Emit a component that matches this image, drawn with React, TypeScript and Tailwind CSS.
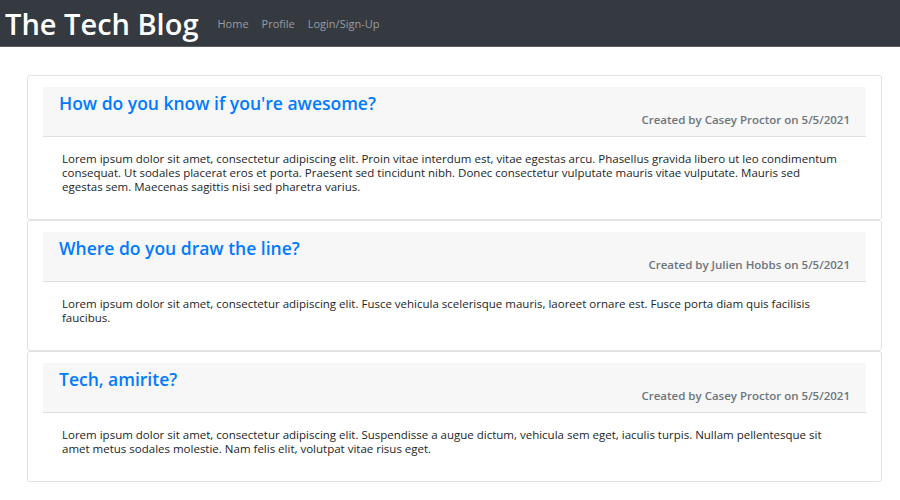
const posts = [
  {
    title: "How do you know if you're awesome?",
    author: 'Casey Proctor',
    date: '5/5/2021',
    body: 'Lorem ipsum dolor sit amet, consectetur adipiscing elit. Proin vitae interdum est, vitae egestas arcu. Phasellus gravida libero ut leo condimentum consequat. Ut sodales placerat eros et porta. Praesent sed tincidunt nibh. Donec consectetur vulputate mauris vitae vulputate. Mauris sed egestas sem. Maecenas sagittis nisi sed pharetra varius.',
  },
  {
    title: 'Where do you draw the line?',
    author: 'Julien Hobbs',
    date: '5/5/2021',
    body: 'Lorem ipsum dolor sit amet, consectetur adipiscing elit. Fusce vehicula scelerisque mauris, laoreet ornare est. Fusce porta diam quis facilisis faucibus.',
  },
  {
    title: 'Tech, amirite?',
    author: 'Casey Proctor',
    date: '5/5/2021',
    body: 'Lorem ipsum dolor sit amet, consectetur adipiscing elit. Suspendisse a augue dictum, vehicula sem eget, iaculis turpis. Nullam pellentesque sit amet metus sodales molestie. Nam felis elit, volutpat vitae risus eget.',
  },
];

const Navbar = () => (
  <nav className="flex h-[47px] items-center border-b border-[#5c5f62] bg-[#343a40] pl-[5px]">
    <h1 className="text-[29px] font-semibold leading-none text-white">The Tech Blog</h1>
    <div className="ml-[19px] mt-[2px] flex gap-[13px] text-[11px] text-[#9a9da0]">
      <a>Home</a>
      <a>Profile</a>
      <a>Login/Sign-Up</a>
    </div>
  </nav>
);

type Post = (typeof posts)[number];

const PostCard = ({ post }: { post: Post }) => (
  <article className="rounded-[3px] border border-[#e2e2e2] px-[15px] pt-[11px]">
    <header className="h-[50px] border-b border-[#dfdfdf] bg-[#f7f7f7] px-[16px] pt-[6px]">
      <h2 className="text-[17.5px] font-semibold leading-[20px] text-[#007bff]">{post.title}</h2>
      <p className="text-right text-[11.5px] font-semibold leading-[14px] text-[#6c757d]">
        Created by {post.author} on {post.date}
      </p>
    </header>
    <p className="pb-[25px] pl-[19px] pr-[25px] pt-[15px] text-[11.5px] leading-[14px] text-[#212529]">{post.body}</p>
  </article>
);

export default function App() {
  return (
    <div className="min-h-[500px] bg-white font-['Open_Sans',sans-serif]">
      <Navbar />
      <main className="mx-[27px] mt-[28px] w-[855px]">
        {posts.map((post) => (
          <PostCard key={post.title} post={post} />
        ))}
      </main>
    </div>
  );
}
